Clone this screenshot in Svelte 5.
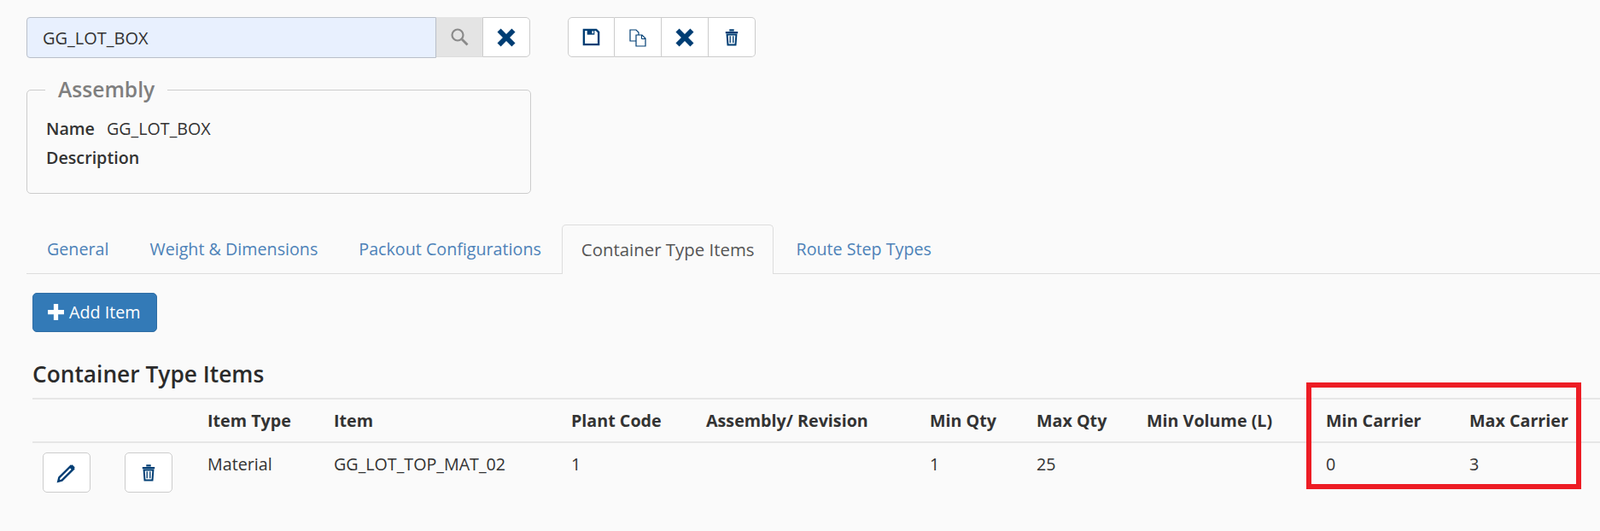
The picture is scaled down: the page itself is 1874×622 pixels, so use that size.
<script>
  const tabs = [
    { label: "General" },
    { label: "Weight & Dimensions" },
    { label: "Packout Configurations" },
    { label: "Container Type Items", active: true },
    { label: "Route Step Types" },
  ];
  const columns = ["", "", "Item Type", "Item", "Plant Code", "Assembly/ Revision", "Min Qty", "Max Qty", "Min Volume (L)", "Min Carrier", "Max Carrier"];
  const row = ["Material", "GG_LOT_TOP_MAT_02", "1", "", "1", "25", "", "0", "3"];
</script>

{#snippet cross()}
  <svg class="ico" viewBox="0 0 24 24" width="28" height="28"><path d="M3 6.500 6.500 3 12 8.500 17.500 3 21 6.500 15.500 12 21 17.500 17.500 21 12 15.500 6.500 21 3 17.500 8.500 12z" fill="currentColor" /></svg>
{/snippet}
{#snippet trash()}
  <svg class="ico" viewBox="0 0 20 24" width="18" height="22"><path d="M7 2.500h6M2 5.500h16" stroke="currentColor" stroke-width="2.500" fill="none" /><path d="M4 8h12l-1 13.500H5z" stroke="currentColor" stroke-width="2.200" fill="none" /><path d="M8 10v9M12 10v9" stroke="currentColor" stroke-width="1.500" /></svg>
{/snippet}

<div class="page">
  <div class="toolbar">
    <div class="search">
      <div class="search-input">GG_LOT_BOX</div>
      <div class="search-addon">
        <svg viewBox="0 0 24 24" width="24" height="24"><circle cx="10" cy="10" r="6.500" stroke="#8a8a8a" stroke-width="2.200" fill="none" /><path d="m15 15 6.500 6.500" stroke="#8a8a8a" stroke-width="2.800" /></svg>
      </div>
      <button class="tool clear">{@render cross()}</button>
    </div>
    <div class="group">
      <button class="tool">
        <svg class="ico" viewBox="0 0 24 24" width="23" height="23"><path d="M3 3h15l3 3v15H3z" stroke="currentColor" stroke-width="2.500" fill="none" /><path d="M7 3h9v6H7z" fill="currentColor" /><path d="M13 4.500h1.800v3H13z" fill="#fff" /></svg>
      </button>
      <button class="tool">
        <svg class="ico" viewBox="0 0 24 24" width="24" height="24"><path d="M10 16H3V3h7l3 3v3" stroke="currentColor" stroke-width="1.200" fill="none" /><path d="M10 9h7l4 4v9H10z" stroke="currentColor" stroke-width="1.200" fill="#fff" /><path d="M16.500 9v4.500H21" stroke="currentColor" stroke-width="1" fill="none" /></svg>
      </button>
      <button class="tool">{@render cross()}</button>
      <button class="tool">{@render trash()}</button>
    </div>
  </div>

  <fieldset class="assembly">
    <legend>Assembly</legend>
    <div class="field"><b>Name</b><span>GG_LOT_BOX</span></div>
    <div class="field"><b>Description</b></div>
  </fieldset>

  <nav class="tabs">
    {#each tabs as tab}
      <a class="tab" class:active={tab.active} href="#top">{tab.label}</a>
    {/each}
  </nav>

  <div class="content">
    <button class="add">
      <svg viewBox="0 0 20 20" width="21" height="21"><path d="M7.500 1h5v6.500H19v5h-6.500V19h-5v-6.500H1v-5h6.500z" fill="#fff" /></svg>
      Add Item
    </button>
    <h2>Container Type Items</h2>
    <div class="table-wrap">
      <table>
        <thead>
          <tr>
            {#each columns as col}
              <th>{col}</th>
            {/each}
          </tr>
        </thead>
        <tbody>
          <tr>
            <td><button class="tool row-btn">
              <svg class="ico" viewBox="0 0 24 24" width="26" height="26"><path d="M4 17 16.500 4.500l3 3L7 20l-4 1z" stroke="currentColor" stroke-width="2.200" fill="none" /><path d="M15 6l3 3 3-3-3-3z" fill="currentColor" /></svg>
            </button></td>
            <td><button class="tool row-btn">{@render trash()}</button></td>
            {#each row as cell}
              <td>{cell}</td>
            {/each}
          </tr>
        </tbody>
      </table>
      <div class="highlight"></div>
    </div>
  </div>
</div>

<style>
  :global(body) {
    background: #fafafa;
  }

  .page {
    font-family: "Open Sans", sans-serif;
    font-size: 19.700px;
    color: #333;
    height: 622px;
    padding: 20px 0 0 31px;
    box-sizing: border-box;
    overflow: hidden;
  }

  .toolbar {
    display: flex;
    gap: 44px;
    align-items: flex-start;
  }

  .search {
    display: flex;
    width: 590px;
    height: 47px;
  }

  .search-input {
    flex: 1;
    height: 48px;
    box-sizing: border-box;
    background: #e8f0fe;
    border: 1px solid #b9bfc9;
    border-radius: 4px 0 0 4px;
    padding-left: 18px;
    line-height: 47px;
    font-size: 20px;
  }

  .search-addon {
    width: 54px;
    background: #e4e4e4;
    border-bottom: 1px solid #ddd;
    box-sizing: border-box;
    display: flex;
    align-items: center;
    justify-content: center;
  }

  .tool {
    background: #fff;
    border: 1px solid #ccc;
    color: #003e74;
    padding: 0;
    display: flex;
    align-items: center;
    justify-content: center;
    box-sizing: border-box;
  }

  .clear {
    width: 56px;
    border-radius: 0 5px 5px 0;
  }

  .group {
    display: flex;
    height: 47px;
  }

  .group .tool {
    width: 55px;
    border-left: 0;
  }

  .group .tool:first-child {
    border-left: 1px solid #ccc;
    border-radius: 5px 0 0 5px;
  }

  .group .tool:last-child {
    border-radius: 0 5px 5px 0;
  }

  .ico {
    display: block;
  }

  .assembly {
    width: 591px;
    height: 137px;
    box-sizing: border-box;
    margin: 23px 0 0;
    padding: 14px 18px 0 22px;
    border: 1px solid #ccc;
    border-radius: 5px;
  }

  legend {
    font-size: 24.600px;
    font-weight: 600;
    color: #7f7f7f;
    padding: 0 15px;
    margin-left: -1px;
    line-height: 30px;
  }

  .field {
    height: 34px;
    line-height: 34px;
    display: flex;
    gap: 14px;
  }

  .field b {
    font-weight: 600;
  }

  .tabs {
    display: flex;
    margin-top: 36px;
    height: 57px;
    border-bottom: 1px solid #ddd;
  }

  .tab {
    padding: 0 23px;
    line-height: 56px;
    color: #4d82b8;
    text-decoration: none;
    border: 1px solid transparent;
    border-bottom: 0;
    border-radius: 5px 5px 0 0;
    height: 57px;
    box-sizing: border-box;
  }

  .tab.active {
    color: #555;
    background: #fafafa;
    border-color: #ddd;
    height: 58px;
    padding: 0 22px;
    margin-right: 2px;
    font-size: 20.400px;
  }

  .content {
    padding: 22px 0 0 7px;
  }

  .add {
    width: 146px;
    height: 46px;
    background: #337ab7;
    border: 1px solid #2e6da4;
    border-radius: 5px;
    color: #fff;
    font: inherit;
    display: flex;
    align-items: center;
    gap: 5px;
    padding: 0 0 2px 16px;
  }

  h2 {
    font-size: 26.300px;
    font-weight: 600;
    color: #2b2b2b;
    margin: 34px 0 0;
    line-height: 30px;
    height: 43px;
  }

  .table-wrap {
    position: relative;
  }

  table {
    width: 1836px;
    table-layout: fixed;
    border-collapse: collapse;
  }

  th {
    text-align: left;
    font-weight: 700;
    color: #333;
    height: 51px;
    padding: 0 0 0 12px;
    border-top: 2px solid #e6e6e6;
    border-bottom: 2px solid #e6e6e6;
    box-sizing: border-box;
    white-space: nowrap;
  }

  th:nth-child(1) { width: 96px; }
  th:nth-child(2) { width: 97px; }
  th:nth-child(3) { width: 148px; }
  th:nth-child(4) { width: 278px; }
  th:nth-child(5) { width: 158px; }
  th:nth-child(6) { width: 262px; }
  th:nth-child(7) { width: 125px; }
  th:nth-child(8) { width: 129px; }
  th:nth-child(9) { width: 210px; }
  th:nth-child(10) { width: 168px; }

  td {
    padding: 11px 0 0 12px;
    vertical-align: top;
    line-height: 28px;
    height: 60px;
    box-sizing: border-box;
  }

  .row-btn {
    width: 56px;
    height: 47px;
    border-radius: 5px;
  }

  /* red annotation drawn over the carrier columns */
  .highlight {
    position: absolute;
    left: 1492px;
    top: -18px;
    width: 322px;
    height: 125px;
    box-sizing: border-box;
    border: 6px solid #ed1c24;
  }
</style>
